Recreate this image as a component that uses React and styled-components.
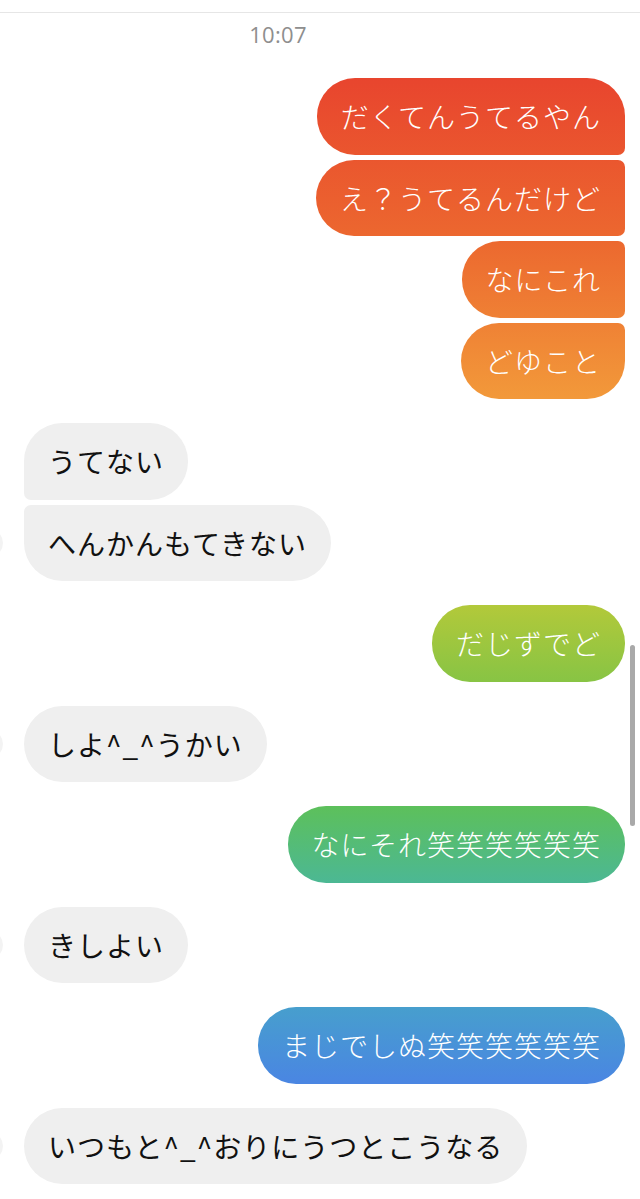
import React from 'react'
import styled, { createGlobalStyle } from 'styled-components'

const GlobalStyle = createGlobalStyle`
  html, body {
    margin: 0;
    padding: 0;
    background: #fff;
  }
  body {
    font-family: "Noto Sans CJK JP", "Noto Sans", sans-serif;
    overflow: hidden;
  }
`

const thread = [
  { side: 'me', lines: ['だくてんうてるやん', 'え？うてるんだけど', 'なにこれ', 'どゆこと'] },
  { side: 'them', lines: ['うてない', 'へんかんもてきない'] },
  { side: 'me', lines: ['だじずでど'] },
  { side: 'them', lines: ['しよ^_^うかい'] },
  { side: 'me', lines: ['なにそれ笑笑笑笑笑笑'] },
  { side: 'them', lines: ['きしよい'] },
  { side: 'me', lines: ['まじでしぬ笑笑笑笑笑笑'] },
  { side: 'them', lines: ['いつもと^_^おりにうつとこうなる'] },
]

function App() {
  return (
    <Screen>
      <GlobalStyle />
      <TopRule />
      <Stamp>10:07</Stamp>
      <Messages>
        {thread.map((group, i) => (
          <Group key={i} side={group.side}>
            {group.side === 'them' && <Avatar />}
            <Stack side={group.side}>
              {group.lines.map((text, j) => (
                <Bubble
                  key={j}
                  side={group.side}
                  first={j === 0}
                  last={j === group.lines.length - 1}
                >
                  {text}
                </Bubble>
              ))}
            </Stack>
          </Group>
        ))}
      </Messages>
      <ScrollThumb />
    </Screen>
  )
}

export default App

const Screen = styled.div`
  position: relative;
  width: 640px;
  height: 1199px;
  overflow: hidden;
  background: #fff;
`

const TopRule = styled.div`
  margin-top: 12px;
  height: 1px;
  background: #e6e6e6;
`

const Stamp = styled.div`
  height: 42px;
  padding-right: 84px;
  display: flex;
  align-items: center;
  justify-content: center;
  font-family: "Open Sans", "Liberation Sans", sans-serif;
  font-size: 22px;
  letter-spacing: 0.3px;
  color: #8e8e8e;
`

const Messages = styled.div`
  display: flex;
  flex-direction: column;
  gap: 24px;
  padding: 23px 15px 0 0;
`

const Group = styled.div`
  display: flex;
  align-items: flex-end;
  justify-content: ${p => (p.side === 'me' ? 'flex-end' : 'flex-start')};
`

const Avatar = styled.div`
  flex: none;
  width: 28px;
  height: 28px;
  margin: 0 21px 24px -25px;
  border-radius: 50%;
  background: #f3f3f3;
`

const Stack = styled.div`
  display: flex;
  flex-direction: column;
  align-items: ${p => (p.side === 'me' ? 'flex-end' : 'flex-start')};
  gap: 5px;
`

const Bubble = styled.div`
  box-sizing: border-box;
  height: 76.5px;
  padding: 0 24px 0 24px;
  display: flex;
  align-items: center;
  font-size: 28px;
  letter-spacing: 1px;
  white-space: nowrap;
  ${p =>
    p.side === 'me'
      ? `
    color: #fff;
    font-weight: 300;
    background: linear-gradient(
      180deg,
      #e43a2d 0px,
      #e8452e 78px,
      #ec682f 240px,
      #f2993a 398px,
      #b3c93a 604px,
      #88c444 681px,
      #5dc05a 805px,
      #4cb893 882px,
      #479fcd 1006px,
      #4a86e2 1082px,
      #4a80e6 1199px
    );
    background-attachment: fixed;
    border-radius: 38px ${p.first ? '38px' : '7px'} ${p.last ? '38px' : '7px'} 38px;
  `
      : `
    color: #111;
    font-weight: 400;
    background: #efefef;
    border-radius: ${p.first ? '38px' : '7px'} 38px 38px ${p.last ? '38px' : '7px'};
  `}
`

const ScrollThumb = styled.div`
  position: absolute;
  left: 630px;
  top: 645px;
  width: 5px;
  height: 181px;
  border-radius: 3px;
  background: #a9a9a9;
`
